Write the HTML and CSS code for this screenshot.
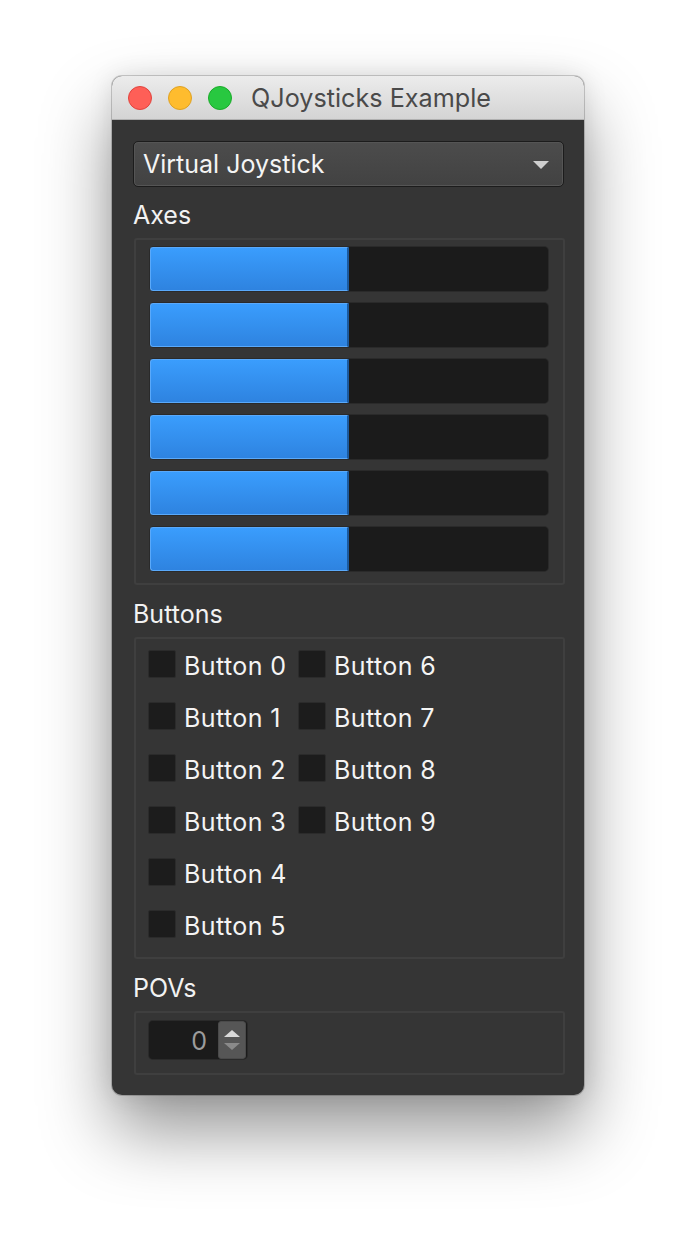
FILE: index.html
```html
<!DOCTYPE html>
<html>
<head>
<meta charset="utf-8">
<link rel="stylesheet" href="styles.css">
</head>
<body>
<div class="window">
  <div class="titlebar">
    <div class="lights">
      <span class="light red"></span>
      <span class="light yellow"></span>
      <span class="light green"></span>
    </div>
    <div class="title">QJoysticks Example</div>
  </div>
  <div class="content">
    <div class="combo">
      <span class="combo-text">Virtual Joystick</span>
      <span class="combo-arrow"></span>
    </div>

    <div class="label">Axes</div>
    <div class="group axes">
      <div class="bar"><div class="chunk" style="width:50%"></div></div>
      <div class="bar"><div class="chunk" style="width:50%"></div></div>
      <div class="bar"><div class="chunk" style="width:50%"></div></div>
      <div class="bar"><div class="chunk" style="width:50%"></div></div>
      <div class="bar"><div class="chunk" style="width:50%"></div></div>
      <div class="bar"><div class="chunk" style="width:50%"></div></div>
    </div>

    <div class="label">Buttons</div>
    <div class="group buttons">
      <div class="check"><span class="box"></span><span class="ctext">Button 0</span></div>
      <div class="check"><span class="box"></span><span class="ctext">Button 1</span></div>
      <div class="check"><span class="box"></span><span class="ctext">Button 2</span></div>
      <div class="check"><span class="box"></span><span class="ctext">Button 3</span></div>
      <div class="check"><span class="box"></span><span class="ctext">Button 4</span></div>
      <div class="check"><span class="box"></span><span class="ctext">Button 5</span></div>
      <div class="check"><span class="box"></span><span class="ctext">Button 6</span></div>
      <div class="check"><span class="box"></span><span class="ctext">Button 7</span></div>
      <div class="check"><span class="box"></span><span class="ctext">Button 8</span></div>
      <div class="check"><span class="box"></span><span class="ctext">Button 9</span></div>
    </div>

    <div class="label">POVs</div>
    <div class="group povs">
      <div class="spin">
        <div class="spin-field">0</div>
        <div class="spin-btn">
          <span class="up"></span>
          <span class="down"></span>
        </div>
      </div>
    </div>
  </div>
</div>
</body>
</html>
```

FILE: styles.css
```css
html, body {
  margin: 0;
  padding: 0;
  background: #ffffff;
}
body {
  font-family: Inter, "Liberation Sans", sans-serif;
  font-size: 25px;
  padding: 76px 0 0 112px;
  min-height: 1244px;
  box-sizing: border-box;
}
.window {
  width: 472px;
  border-radius: 10px;
  background: #353535;
  box-shadow: 0 36px 70px rgba(0,0,0,0.42), 0 0 24px rgba(0,0,0,0.10), 0 0 0 1px rgba(0,0,0,0.18);
  overflow: hidden;
}
.titlebar {
  height: 43px;
  display: flex;
  align-items: center;
  background: linear-gradient(#ececec, #d4d4d4);
  border-bottom: 1px solid #b0b0b0;
  padding-left: 16px;
}
.lights {
  display: flex;
  gap: 16px;
}
.light {
  width: 22px;
  height: 22px;
  border-radius: 50%;
  display: block;
}
.red { background: #fe5f57; border: 1px solid #e0443e; }
.yellow { background: #febc2e; border: 1px solid #dea123; }
.green { background: #28c840; border: 1px solid #1aab29; }
.title {
  margin-left: 19px;
  color: #4a4a4a;
  font-size: 25.2px;
  line-height: 30px;
}
.content {
  padding: 21px 20px 20px 21px;
}
.combo {
  height: 44px;
  border: 1px solid #1c1c1c;
  border-radius: 5px;
  background: linear-gradient(#4c4c4c, #424242);
  box-shadow: inset 0 0 0 1px #555;
  display: flex;
  align-items: center;
  justify-content: space-between;
  padding: 0 14px 0 9px;
  color: #f4f4f4;
  margin-bottom: 13px;
}
.combo-text {
  line-height: 30px;
}
.combo-arrow {
  width: 0;
  height: 0;
  border-left: 8px solid transparent;
  border-right: 8px solid transparent;
  border-top: 8px solid #cfcfcf;
  margin-top: 2px;
}
.label {
  color: #f2f2f2;
  line-height: 30px;
  height: 30px;
  margin-bottom: 8px;
}
.group {
  margin-left: 1px;
  margin-right: -1px;
  border: 2px solid #3f3f3f;
  border-radius: 3px;
  margin-bottom: 14px;
}
.group:last-child {
  margin-bottom: 0;
}
.axes {
  padding: 7px 15px 12px 14px;
  display: flex;
  flex-direction: column;
  gap: 12px;
}
.bar {
  height: 44px;
  background: #1b1b1b;
  border-radius: 4px;
  box-shadow: 0 0 0 1px #2a2a2a;
  display: flex;
}
.chunk {
  height: 44px;
  box-sizing: border-box;
  background: linear-gradient(#3a9dfd, #2e83e0);
  border: 1px solid #5aa9fa;
  border-right: 2px solid #1c5a9e;
  border-radius: 3px 0 0 3px;
}
.buttons {
  padding: 11px 12px 19px 12px;
  display: grid;
  grid-template-rows: repeat(6, 28px);
  grid-template-columns: 150px 150px;
  grid-auto-flow: column;
  row-gap: 24px;
}
.check {
  display: flex;
  align-items: center;
  height: 28px;
}
.box {
  width: 26px;
  height: 26px;
  background: #1c1c1c;
  border: 1px solid #2b2b2b;
  border-radius: 2px;
  flex: none;
}
.ctext {
  margin-left: 8px;
  color: #f4f4f4;
  line-height: 28px;
  padding-top: 3px;
  letter-spacing: 0.4px;
}
.povs {
  padding: 8px 13px 14px 13px;
  display: flex;
}
.spin {
  display: flex;
  width: 98px;
  height: 38px;
  border-radius: 4px;
  background: #1b1b1b;
  box-shadow: 0 0 0 1px #2a2a2a;
  overflow: hidden;
}
.spin-field {
  width: 69px;
  box-sizing: border-box;
  text-align: right;
  padding-right: 11px;
  color: #9c9c9c;
  line-height: 38px;
  padding-top: 1px;
}
.spin-btn {
  width: 28px;
  margin-right: 1px;
  background: #565656;
  border-radius: 3px;
  border: 1px solid #4a4a4a;
  box-sizing: border-box;
  display: flex;
  flex-direction: column;
  align-items: center;
  justify-content: center;
  gap: 6px;
}
.up {
  width: 0;
  height: 0;
  border-left: 8px solid transparent;
  border-right: 8px solid transparent;
  border-bottom: 7px solid #dadada;
}
.down {
  width: 0;
  height: 0;
  border-left: 8px solid transparent;
  border-right: 8px solid transparent;
  border-top: 7px solid #8a8a8a;
}
```
